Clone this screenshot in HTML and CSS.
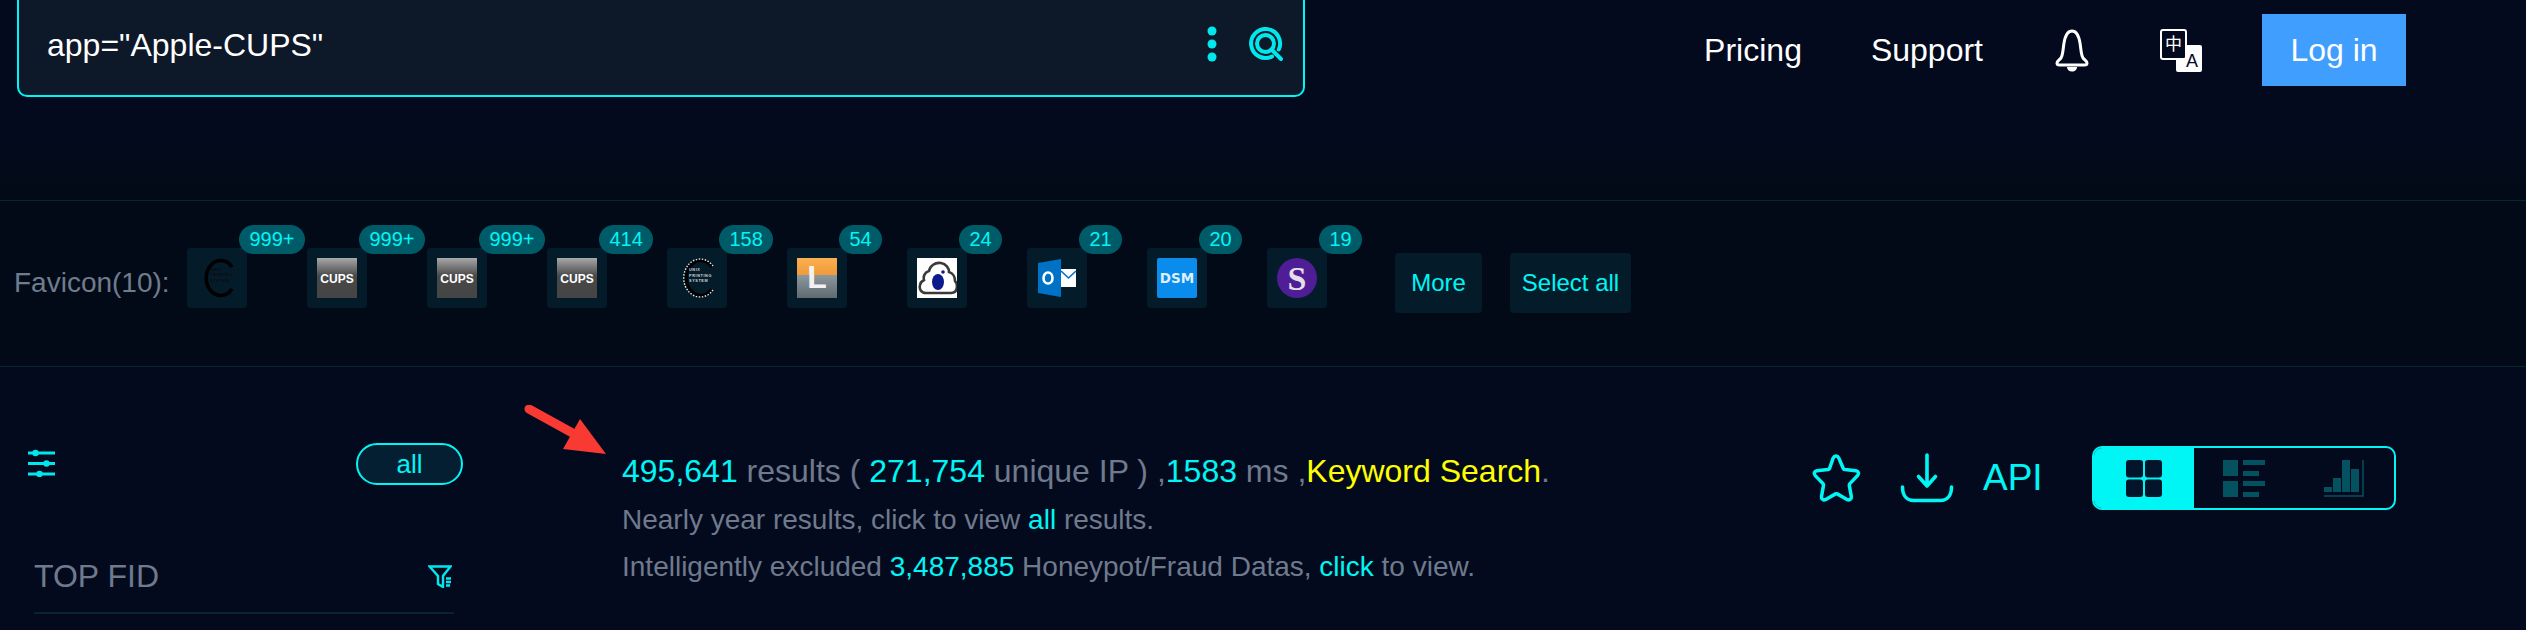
FILE: index.html
```html
<!DOCTYPE html>
<html lang="en">
<head>
<meta charset="utf-8">
<title>Search results</title>
<link rel="stylesheet" href="styles.css">
</head>
<body>
<div class="page">
  <header class="header">
    <div class="search">
      <span class="query">app="Apple-CUPS"</span>
      <span class="search-icons">
        <svg class="dots" width="12" height="36" viewBox="0 0 12 36"><circle cx="6" cy="5" r="4.5"/><circle cx="6" cy="18" r="4.5"/><circle cx="6" cy="31" r="4.5"/></svg>
        <svg class="lens" width="34" height="34" viewBox="0 0 34 34"><path d="M23 29.500A14.500 14.500 0 1 1 29.800 22.500"/><circle cx="16.500" cy="16.500" r="8.500"/><path d="M22.500 22.500L32 32"/></svg>
      </span>
    </div>
    <nav class="nav">
      <a class="nav-link first">Pricing</a>
      <a class="nav-link">Support</a>
      <svg class="bell" width="34" height="43" viewBox="0 0 34 43"><path d="M17 2c-4.500 0-7 6-8 12-1 6-1 12-3 15-1.500 2-4 3-4 5 0 1.500 1 2 2.500 2h25c1.500 0 2.500-.5 2.500-2 0-2-2.500-3-4-5-2-3-2-9-3-15-1-6-3.500-12-8-12z"/><path class="bell-clap" d="M12 38h10c0 2.500-2 4.500-5 4.500s-5-2-5-4.500z"/></svg>
      <svg class="lang" width="42" height="43" viewBox="0 0 42 43"><rect x="16" y="16" width="26" height="27" rx="2" class="lang-front"/><rect x="1" y="1" width="25" height="29" rx="2" class="lang-back"/><text x="13.500" y="21" class="lang-zh">中</text><text x="32" y="38" class="lang-a">A</text></svg>
      <button class="login">Log in</button>
    </nav>
  </header>

  <section class="favicons">
    <span class="fav-label">Favicon(10):</span>
    <div class="fav-list">
      <div class="fav"><span class="badge">999+</span>
        <svg class="fav-img" viewBox="0 0 40 40"><path class="c-arc" d="M35 9A14.500 17.500 0 1 0 35 31"/><text x="13" y="12.500" class="c-txt">UNIX</text><text x="13" y="18" class="c-txt">PRINTING</text><text x="13" y="23.500" class="c-txt">SYSTEM</text></svg>
      </div>
      <div class="fav"><span class="badge">999+</span>
        <svg class="fav-img" viewBox="0 0 40 40"><defs><linearGradient id="cg" x1="0" y1="0" x2="0" y2="1"><stop offset="0" stop-color="#a8a8a8"/><stop offset=".45" stop-color="#484848"/><stop offset="1" stop-color="#454545"/></linearGradient></defs><rect width="40" height="40" fill="url(#cg)"/><text x="20" y="24.500" class="cups">CUPS</text></svg>
      </div>
      <div class="fav"><span class="badge">999+</span>
        <svg class="fav-img" viewBox="0 0 40 40"><rect width="40" height="40" fill="url(#cg)"/><text x="20" y="24.500" class="cups">CUPS</text></svg>
      </div>
      <div class="fav"><span class="badge">414</span>
        <svg class="fav-img" viewBox="0 0 40 40"><rect width="40" height="40" fill="url(#cg)"/><text x="20" y="24.500" class="cups">CUPS</text></svg>
      </div>
      <div class="fav"><span class="badge">158</span>
        <svg class="fav-img" viewBox="0 0 40 40"><path class="c-arc" d="M35 9A14.500 17.500 0 1 0 35 31"/><path class="c-dash" d="M36 8A16.500 19 0 1 0 36 32"/><text x="12" y="13" class="c-txt grey">UNIX</text><text x="12" y="18.500" class="c-txt grey">PRINTING</text><text x="12" y="24" class="c-txt grey">SYSTEM</text></svg>
      </div>
      <div class="fav"><span class="badge">54</span>
        <svg class="fav-img" viewBox="0 0 40 40"><defs><linearGradient id="lg" x1="0" y1="0" x2="0" y2="1"><stop offset="0" stop-color="#fbb04f"/><stop offset=".42" stop-color="#f09a3a"/><stop offset=".43" stop-color="#8d989e"/><stop offset="1" stop-color="#5f6a70"/></linearGradient></defs><rect width="40" height="40" fill="url(#lg)"/><text x="20" y="30" class="l-txt">L</text></svg>
      </div>
      <div class="fav"><span class="badge">24</span>
        <svg class="fav-img" viewBox="0 0 40 40"><rect width="40" height="40" fill="#fff"/><path class="cloud" d="M9 35c-5 0-7-4-6-8 .5-3 2-4 4-5-1-4 1-8 5-9 1-5 6-9 12-8 5 1 8 5 8 9 4 1 6 5 6 9 1 1 2 3 2 5 0 4-2 7-6 7z"/><ellipse cx="21" cy="24" rx="6" ry="8" fill="#0b1a8c"/><circle cx="26" cy="14" r="1.800" fill="#0b1a8c"/></svg>
      </div>
      <div class="fav"><span class="badge">21</span>
        <svg class="fav-img" viewBox="0 0 40 40"><polygon points="1,5 24,1 24,39 1,35" fill="#0072c6"/><ellipse cx="11" cy="20" rx="4.500" ry="5.500" class="o-ring"/><rect x="24" y="11" width="15" height="18" fill="#fff"/><path d="M24 13l7.500 7L39 13" class="o-env"/></svg>
      </div>
      <div class="fav"><span class="badge">20</span>
        <svg class="fav-img" viewBox="0 0 40 40"><rect width="40" height="40" rx="2" fill="#0a8cec"/><text x="20" y="25" class="dsm">DSM</text></svg>
      </div>
      <div class="fav"><span class="badge">19</span>
        <svg class="fav-img" viewBox="0 0 40 40"><circle cx="20" cy="20" r="20" fill="#4f1d96"/><text x="20" y="32" class="s-txt">S</text></svg>
      </div>
    </div>
    <div class="fav-actions">
      <button class="fav-btn more">More</button>
      <button class="fav-btn all">Select all</button>
    </div>
  </section>

  <main class="main">
    <aside class="side">
      <div class="side-top">
        <svg class="sliders" width="28" height="28" viewBox="0 0 28 28"><path d="M0 4h27M0 14.500h27M0 25h27"/><circle cx="7.500" cy="4" r="3.200"/><circle cx="18.500" cy="14.500" r="3.200"/><circle cx="11.500" cy="25" r="3.200"/></svg>
        <span class="pill">all</span>
      </div>
      <div class="side-head">
        <span class="side-title">TOP FID</span>
        <svg class="funnel" width="24" height="23" viewBox="0 0 24 23"><path d="M1.500 1.500h21l-7.500 9.500v11l-5-3v-8z"/><path d="M18 13.500h5M18 17h5M18 20.500h4"/></svg>
      </div>
    </aside>
    <div class="results">
      <svg class="arrow" width="90" height="60" viewBox="0 0 90 60"><path d="M7 4L65 36" class="arrow-shaft"/><polygon points="58,14 84,49 41,44"/></svg>
      <p class="line-main"><b class="cy">495,641</b> results ( <b class="cy">271,754</b> unique IP ) ,<b class="cy">1583</b> ms ,<b class="yl">Keyword Search</b>.</p>
      <p class="line-sub">Nearly year results, click to view <a class="cy">all</a> results.</p>
      <p class="line-sub">Intelligently excluded <b class="cy">3,487,885</b> Honeypot/Fraud Datas, <a class="cy">click</a> to view.</p>
    </div>
    <div class="tools">
      <svg class="star" width="52" height="50" viewBox="0 0 52 50"><path d="M26 3c1.300 0 2.200.8 2.800 2l4.500 10.500c.3.700.9 1 1.600 1.100l11 1.200c2.700.3 3.500 3 1.700 4.800l-7.700 8c-.5.500-.7 1.100-.6 1.800l2 11c.5 2.600-2 4.300-4.300 3l-9.700-5.500c-.6-.3-1.200-.3-1.800 0l-9.700 5.500c-2.300 1.300-4.800-.4-4.300-3l2-11c.1-.7-.1-1.300-.6-1.800l-7.700-8c-1.800-1.800-1-4.500 1.700-4.800l11-1.200c.7-.1 1.300-.4 1.600-1.100L23.200 5c.6-1.200 1.500-2 2.800-2z"/></svg>
      <svg class="download" width="54" height="50" viewBox="0 0 54 50"><path d="M27 2v31M18.500 23.500L27 33l8.500-9.500M2.500 34c0 8 4 13.500 11 13.500h27c7 0 11-5.500 11-13.500"/></svg>
      <span class="api">API</span>
      <div class="toggle">
        <div class="seg active">
          <svg width="36" height="37" viewBox="0 0 36 37"><rect width="17" height="17.500" rx="3"/><rect x="19" width="17" height="17.500" rx="3"/><rect y="19.500" width="17" height="17.500" rx="3"/><rect x="19" y="19.500" width="17" height="17.500" rx="3"/></svg>
        </div>
        <div class="seg">
          <svg width="42" height="37" viewBox="0 0 42 37"><rect width="15" height="16"/><rect y="21" width="15" height="16"/><rect x="20" width="22" height="5"/><rect x="20" y="11" width="16" height="5"/><rect x="20" y="21" width="22" height="5"/><rect x="20" y="32" width="16" height="5"/></svg>
        </div>
        <div class="seg">
          <svg width="40" height="37" viewBox="0 0 40 37"><rect y="27" width="8" height="5"/><rect x="9" y="18" width="8" height="14"/><rect x="18" width="8" height="32"/><rect x="27" y="9" width="8" height="23"/><path class="axis" d="M39 0v36H0"/></svg>
        </div>
      </div>
    </div>
  </main>
</div>
</body>
</html>
```
FILE: styles.css
```css
* { box-sizing: border-box; }
html, body { margin: 0; padding: 0; }
body {
  background: #030a1e;
  font-family: "Liberation Sans", Arial, sans-serif;
  color: #6f7a8c;
  overflow: hidden;
}
.page { width: 2526px; height: 630px; display: flex; flex-direction: column; }
p { margin: 0; }
b { font-weight: 400; }
svg { display: block; flex: none; }

/* header */
.header {
  height: 200px;
  flex: none;
  display: flex;
  align-items: flex-start;
  padding: 0 120px 0 17px;
  background: linear-gradient(#030a1e 0, #030a1e 110px, #020a17 200px);
}
.search {
  width: 1288px;
  height: 97px;
  display: flex;
  align-items: center;
  justify-content: space-between;
  padding: 0 20px 4px 28px;
  background: #0d1828;
  border: 2px solid #00f5f5;
  border-top: 0;
  border-radius: 0 0 10px 10px;
}
.query { color: #fff; font-size: 32px; }
.search-icons { display: flex; align-items: center; gap: 31px; margin-bottom: 3px; }
.dots { fill: #00e8ee; }
.lens { fill: none; stroke: #00e8ee; stroke-width: 4; stroke-linecap: round; }
.nav { margin-left: auto; height: 100px; display: flex; align-items: center; gap: 70px; }
.nav-link { color: #fff; font-size: 32px; }
.nav-link.first { margin-right: -1px; }
.bell { fill: none; stroke: #fff; stroke-width: 3; margin-left: 2px; }
.bell-clap { fill: #fff; stroke: none; }
.lang { margin-left: 1px; margin-right: -10px; }
.lang-back { fill: #030a1e; stroke: #fff; stroke-width: 2; }
.lang-front { fill: #fff; }
.lang-zh { fill: #fff; font: 17px "Noto Sans CJK SC", sans-serif; text-anchor: middle; }
.lang-a { fill: #030a1e; font: 18px "Liberation Sans", sans-serif; text-anchor: middle; }
.login {
  width: 144px;
  height: 72px;
  border: 0;
  background: #409eff;
  color: #fff;
  font: 32px "Liberation Sans", Arial, sans-serif;
}

/* favicon strip */
.favicons {
  height: 167px;
  flex: none;
  display: flex;
  align-items: center;
  padding: 0 0 0 14px;
  background: #020a17;
  border-top: 1px solid #0a2530;
  border-bottom: 1px solid #0a2530;
}
.fav-label { width: 173px; flex: none; font-size: 28px; color: #6f7c8e; margin-bottom: 2px; }
.fav-list { display: flex; gap: 60px; margin-bottom: 11px; }
.fav {
  position: relative;
  width: 60px;
  height: 60px;
  padding: 10px;
  background: #041c2a;
  border-radius: 4px;
}
.fav-img { width: 40px; height: 40px; }
.badge {
  position: absolute;
  left: 52px;
  top: -23px;
  height: 29px;
  padding: 0 10.5px;
  line-height: 29px;
  border-radius: 15px;
  background: #005b68;
  color: #00f5f5;
  font-size: 20px;
  white-space: nowrap;
}
.c-arc { fill: none; stroke: #000; stroke-width: 3.600; }
.c-dash { fill: none; stroke: #e4e7e9; stroke-width: 1.400; stroke-dasharray: 1.500 1.500; }
.c-txt { font: 700 3.800px "Liberation Sans", sans-serif; fill: #0b0b0b; letter-spacing: .6px; }
.c-txt.grey { fill: #d2d7da; }
.cups { font: 700 12px "Liberation Sans", sans-serif; fill: #fff; text-anchor: middle; }
.l-txt { font: 700 32px "Liberation Sans", sans-serif; fill: #f2f2f2; text-anchor: middle; }
.cloud { fill: #fff; stroke: #3a3a3a; stroke-width: 2.600; }
.o-ring { fill: none; stroke: #fff; stroke-width: 2.600; }
.o-env { fill: none; stroke: #0072c6; stroke-width: 1.600; }
.dsm { font: 700 13.500px "DejaVu Sans", sans-serif; fill: #dfeffb; text-anchor: middle; }
.s-txt { font: 700 34px "Liberation Serif", serif; fill: #e2dfe6; text-anchor: middle; }
.fav-actions { display: flex; gap: 28px; margin: 0 0 2px 68px; }
.fav-btn {
  height: 60px;
  padding: 0;
  border: 0;
  border-radius: 4px;
  background: #041c2a;
  color: #00f5f5;
  font: 24px "Liberation Sans", Arial, sans-serif;
}
.more { width: 87px; }
.all { width: 121px; }

/* main */
.main { flex: 1; display: flex; align-items: flex-start; padding-top: 76px; }
.side { width: 454px; flex: none; padding-left: 28px; margin-right: 168px; }
.side-top { display: flex; align-items: center; justify-content: space-between; margin-right: -9px; }
.sliders { fill: #00e8ee; stroke: #00e8ee; stroke-width: 3; margin-top: -2px; }
.sliders circle { stroke: none; }
.pill {
  width: 107px;
  height: 42px;
  display: flex;
  align-items: center;
  justify-content: center;
  border: 2px solid #00f5f5;
  border-radius: 21px;
  background: #041e32;
  color: #00f5f5;
  font-size: 26px;
}
.side-head {
  display: flex;
  align-items: center;
  justify-content: space-between;
  height: 64px;
  margin: 65px 0 0 6px;
  padding: 0 2px 10px 0;
  border-bottom: 2px solid #082230;
}
.side-title { font-size: 32px; color: #6f7a8c; }
.funnel { fill: none; stroke: #00e8ee; stroke-width: 2.400; }
.results { position: relative; width: 1000px; flex: none; }
.arrow { position: absolute; left: -100px; top: -38px; fill: #f83a32; }
.arrow-shaft { fill: none; stroke: #f83a32; stroke-width: 9; stroke-linecap: round; }
.line-main { font-size: 32px; line-height: 40px; margin-top: 8px; }
.line-sub { font-size: 28px; line-height: 30px; margin-top: 17px; }
.line-main + .line-sub { margin-top: 14px; }
.cy { color: #00f5f5; }
.yl { color: #ffff00; }
.tools { display: flex; align-items: center; margin-left: 188px; margin-top: 3px; }
.star { fill: none; stroke: #00f5f5; stroke-width: 3.500; }
.download { fill: none; stroke: #00f5f5; stroke-width: 3.600; stroke-linecap: round; stroke-linejoin: round; margin-left: 38px; }
.api { margin-left: 29px; color: #00f5f5; font-size: 37px; }
.toggle {
  display: flex;
  width: 304px;
  height: 64px;
  margin-left: 49px;
  border: 2px solid #00f5f5;
  border-radius: 10px;
  overflow: hidden;
}
.seg { flex: 1; display: flex; align-items: center; justify-content: center; fill: #04515f; }
.seg.active { flex: none; width: 100px; background: #00f5f5; fill: #03152a; }
.axis { fill: none; stroke: #04515f; stroke-width: 1.500; }
```
